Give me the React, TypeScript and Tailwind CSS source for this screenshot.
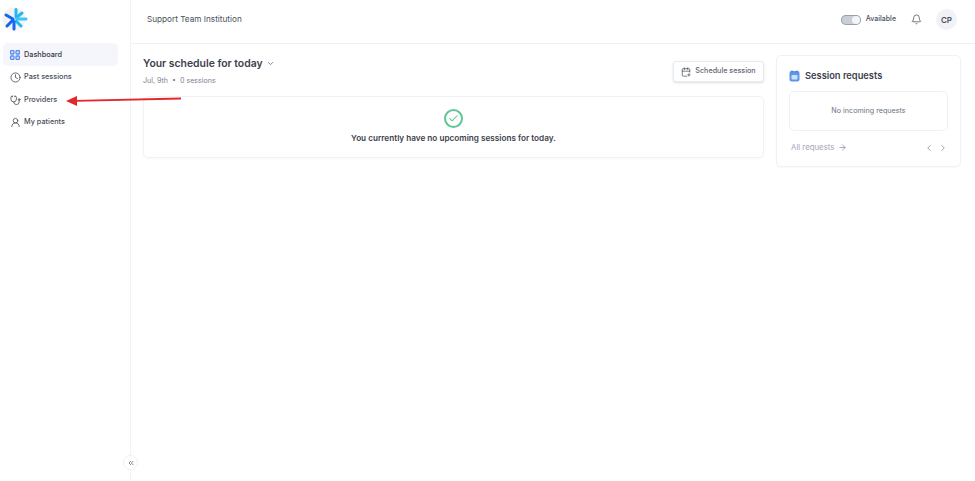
import React from 'react';
import { Clock, Stethoscope, UserRound, Bell, ChevronDown, ChevronLeft, ChevronRight, ChevronsLeft, ArrowRight, CalendarPlus, Check } from 'lucide-react';

const DashboardIcon: React.FC = () => (
  <svg width="10" height="10" viewBox="0 0 10 10" fill="#dbe6fb" stroke="#5b8def" strokeWidth="1.3">
    <rect x="0.6" y="0.6" width="3.4" height="3.4" rx="0.8" />
    <rect x="6" y="0.6" width="3.4" height="3.4" rx="0.8" />
    <rect x="0.6" y="6" width="3.4" height="3.4" rx="0.8" />
    <rect x="6" y="6" width="3.4" height="3.4" rx="0.8" />
  </svg>
);

const Logo: React.FC = () => (
  <svg width="26" height="24" viewBox="0 0 26 24" fill="none" strokeLinecap="round" strokeWidth="3">
    <circle cx="12" cy="12" r="11.5" fill="#f1f3f6" stroke="none" />
    <path d="M14 2.5 V9.5" stroke="#22b8f0" />
    <path d="M14.5 10.5 L20 6" stroke="#22b8f0" />
    <path d="M15 12 H24" stroke="#38c6f4" />
    <path d="M14 14 L19 19" stroke="#22b8f0" />
    <path d="M4 8 L11 12" stroke="#1565f0" />
    <path d="M11 13 L5 19" stroke="#1565f0" />
    <path d="M12 15 V22" stroke="#1565f0" />
  </svg>
);

const navItems = [
  { name: 'Past sessions', icon: <Clock size={11} strokeWidth={1.8} /> },
  { name: 'Providers', icon: <Stethoscope size={11} strokeWidth={1.8} /> },
  { name: 'My patients', icon: <UserRound size={11} strokeWidth={1.8} /> },
];

const App: React.FC = () => {
  return (
    <div className="relative flex h-[481px] w-[975px] overflow-hidden bg-white font-['Inter',sans-serif] text-[#3d4350]">
      {/* Sidebar */}
      <aside className="relative flex w-[131px] shrink-0 flex-col border-r border-[#f2f3f6] pl-[3px]">
        <div className="-ml-[1px] h-[43px] pt-[7px]">
          <Logo />
        </div>
        <nav className="flex w-[115px] flex-col">
          <a className="flex h-[23px] items-center gap-[4px] rounded-[5px] bg-[#f4f6fb] pl-[7px] pt-[1px] text-[7.3px] font-medium text-[#343a48]">
            <DashboardIcon />
            Dashboard
          </a>
          {navItems.map((item) => (
            <a key={item.name} className="flex h-[22.5px] items-center gap-[3px] pl-[7px] pt-[1px] text-[7.3px] font-medium text-[#4a505c]">
              {item.icon}
              {item.name}
            </a>
          ))}
        </nav>
        <button className="absolute left-[123px] top-[455px] flex h-[15px] w-[15px] items-center justify-center rounded-full border border-[#eef0f3] bg-white text-[#5b616d]">
          <ChevronsLeft size={8} strokeWidth={2.4} />
        </button>
      </aside>

      <div className="flex min-w-0 flex-1 flex-col">
        {/* Header */}
        <header className="flex h-[44px] shrink-0 items-center justify-between border-b border-[#f0f1f4] pb-[4px] pl-[16px] pr-[18px]">
          <span className="text-[8.2px] text-[#4a505c]">Support Team Institution</span>
          <div className="flex items-center">
            <div className="flex h-[10px] w-[20px] items-center justify-end rounded-full bg-[#c9ced7] pr-[1px] shadow-[inset_0_0_0_1px_#9aa1ad]">
              <div className="h-[8px] w-[8px] rounded-full bg-[#f4f5f7]" />
            </div>
            <span className="ml-[5px] text-[7px] font-medium text-[#4a505c]">Available</span>
            <Bell size={11} strokeWidth={1.8} className="ml-[15px] text-[#555b67]" />
            <div className="ml-[14px] flex h-[21px] w-[21px] items-center justify-center rounded-full bg-[#f0f2f6] text-[8px] font-semibold text-[#4a505c]">CP</div>
          </div>
        </header>

        {/* Main */}
        <main className="flex items-start gap-[12px] pl-[12px] pt-[11px]">
          <section className="w-[621px]">
            <div className="flex h-[41px] items-start justify-between">
              <div>
                <div className="flex items-center gap-[3px] pt-[1px]">
                  <h1 className="text-[10.4px] font-semibold leading-[15px] text-[#3c414d]">Your schedule for today</h1>
                  <ChevronDown size={9} strokeWidth={2.2} className="text-[#6b7280]" />
                </div>
                <p className="mt-[5px] text-[7.1px] leading-[10px] text-[#7c828e]">Jul, 9th&nbsp; •&nbsp; 0 sessions</p>
              </div>
              <button className="mt-[6px] flex h-[21px] w-[91px] items-center justify-center gap-[4px] rounded-[3px] border border-[#e8eaef] bg-white text-[7.2px] font-medium text-[#5f6572] shadow-sm">
                <CalendarPlus size={10} strokeWidth={1.8} className="text-[#4a505c]" />
                Schedule session
              </button>
            </div>
            <div className="flex h-[62px] flex-col items-center rounded-[5px] border border-[#eff1f4] pt-[12px] shadow-[0_1px_2px_rgba(0,0,0,0.03)]">
              <div className="flex h-[19px] w-[19px] items-center justify-center rounded-full border-[2px] border-[#5cc795]">
                <Check size={11} strokeWidth={2.2} className="text-[#5cc795]" />
              </div>
              <p className="mt-[5px] text-[8.2px] font-semibold leading-[10px] text-[#3c414d]">You currently have no upcoming sessions for today.</p>
            </div>
          </section>

          <section className="h-[112px] w-[185px] rounded-[5px] border border-[#eff1f4] px-[12px] pt-[13px] shadow-[0_1px_2px_rgba(0,0,0,0.03)]">
            <div className="flex items-center gap-[5px]">
              <svg width="11" height="12" viewBox="0 0 11 12" fill="none">
                <rect x="0.5" y="1" width="10" height="10.5" rx="2" fill="#5d94ee" />
                <path d="M3 0.5V2.5M8 0.5V2.5" stroke="#3f78d8" strokeWidth="1" />
                <rect x="2.5" y="5" width="6" height="4.5" rx="0.8" fill="#cfe0fb" />
              </svg>
              <h2 className="text-[9.3px] font-semibold leading-[14px] text-[#3c414d]">Session requests</h2>
            </div>
            <div className="mt-[8px] flex h-[40px] items-center justify-center rounded-[5px] border border-[#eff1f4] text-[7.2px] text-[#6b717d]">
              No incoming requests
            </div>
            <div className="mt-[11px] flex items-center justify-between pl-[2px] text-[#a4a9b3]">
              <span className="flex items-center gap-[4px] text-[7.8px]">
                All requests
                <ArrowRight size={9} strokeWidth={1.8} className="text-[#7c828e]" />
              </span>
              <span className="flex items-center gap-[4px] text-[#7c828e]">
                <ChevronLeft size={10} strokeWidth={1.8} />
                <ChevronRight size={10} strokeWidth={1.8} />
              </span>
            </div>
          </section>
        </main>
      </div>

      {/* Annotation arrow */}
      <svg className="absolute left-0 top-0" width="975" height="481" fill="none">
        <path d="M181 98.5 L75 100.8" stroke="#e5262b" strokeWidth="1.8" />
        <path d="M66 101 L77 96 L77 106 Z" fill="#e5262b" />
      </svg>
    </div>
  );
};

export default App;
